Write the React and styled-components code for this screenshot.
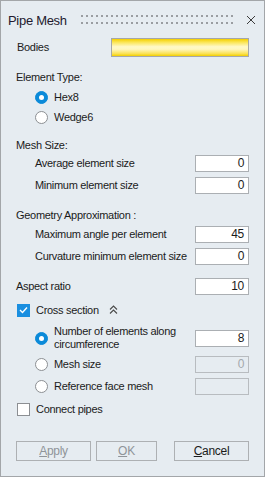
import React from 'react'
import styled, { createGlobalStyle } from 'styled-components'

const Global = createGlobalStyle`
  html, body { margin: 0; padding: 0; background: #e6ecf1; }
  * { box-sizing: border-box; }
`

const Window = styled.div`
  width: 265px;
  height: 477px;
  border: 1px solid #a3a6a9;
  background: #e6ecf1;
  display: flex;
  flex-direction: column;
  font-family: "Liberation Sans", Arial, sans-serif;
  font-size: 11px;
  letter-spacing: -0.3px;
  color: #1b1b1b;
`

const TitleBar = styled.div`
  height: 30px;
  padding: 8px 0 0 7px;
  display: flex;
  align-items: center;
`

const Title = styled.div`
  font-size: 13px;
  color: #231a2e;
  width: 73px;
`

const Grip = styled.div`
  width: 153px;
  height: 10px;
  display: flex;
`

const Close = styled.div`
  margin-left: 12px;
  width: 10px;
  height: 10px;
  display: flex;
`

const Body = styled.div`
  flex: 1;
  display: flex;
  flex-direction: column;
  padding: 0 15px 15px 15px;
`

const Row = styled.div`
  display: flex;
  align-items: center;
  height: ${p => p.h || 17}px;
  margin-top: ${p => p.mt || 0}px;
  padding-left: ${p => p.indent || 0}px;
`

const Label = styled.div`
  flex: 1;
  line-height: 13px;
  white-space: nowrap;
`

const Picker = styled.div`
  width: 138px;
  height: 19px;
  border: 1px solid #a5a7a9;
  background: linear-gradient(#f5d000 0%, #fbe65a 20%, #fff8c6 45%, #fff7c0 60%, #fbe25a 85%, #f3cf00 100%);
`

const Field = styled.div`
  width: 54px;
  height: 17px;
  border: 1px solid ${p => (p.disabled ? '#b8bcc0' : '#abafb3')};
  background: ${p => (p.disabled ? '#e6ecf1' : '#ffffff')};
  color: ${p => (p.disabled ? '#a3a8ad' : '#1b1b1b')};
  text-align: right;
  padding: 0 4px;
  font-size: 12px;
  line-height: 15px;
`

const Radio = styled.span`
  width: 13px;
  height: 13px;
  border-radius: 50%;
  flex: none;
  margin-right: 6px;
  background: ${p => (p.on ? '#0b8ad9' : '#ffffff')};
  border: 1px solid ${p => (p.on ? '#0b8ad9' : '#8c8f93')};
  display: flex;
  align-items: center;
  justify-content: center;
  &::after {
    content: '';
    display: ${p => (p.on ? 'block' : 'none')};
    width: 5px;
    height: 5px;
    border-radius: 50%;
    background: #ffffff;
  }
`

const Check = styled.span`
  width: 13px;
  height: 13px;
  flex: none;
  margin-right: 6px;
  background: ${p => (p.on ? '#1a8fe0' : '#ffffff')};
  border: 1px solid ${p => (p.on ? '#1a8fe0' : '#8c8f93')};
  display: flex;
  align-items: center;
  justify-content: center;
`

const Chevrons = styled.span`
  margin-left: 10px;
  display: flex;
`

const Buttons = styled.div`
  margin-top: auto;
  display: flex;
  height: 20px;
`

const Button = styled.div`
  width: ${p => p.w}px;
  margin-right: ${p => p.mr || 0}px;
  height: 20px;
  border: 1px solid #adb0b3;
  background: #e6ecf1;
  display: flex;
  align-items: center;
  justify-content: center;
  font-size: 12px;
  color: ${p => (p.disabled ? '#8f9499' : '#1b1b1b')};
  u { text-decoration: underline; }
`

const Input = ({ value, disabled }) => <Field disabled={disabled}>{value}</Field>

export default function App() {
  return (
    <Window>
      <Global />
      <TitleBar>
        <Title>Pipe Mesh</Title>
        <Grip>
          <svg width="153" height="10" viewBox="0 0 153 10">
            <defs>
              <pattern id="dots" width="5" height="7" patternUnits="userSpaceOnUse">
                <rect x="0" y="0" width="2" height="2" fill="#9a9da1" />
              </pattern>
            </defs>
            <rect x="0" y="0" width="153" height="9" fill="url(#dots)" />
          </svg>
        </Grip>
        <Close>
          <svg width="10" height="10" viewBox="0 0 10 10">
            <path d="M1 1 L9 9 M9 1 L1 9" stroke="#3c3c3c" strokeWidth="1" />
          </svg>
        </Close>
      </TitleBar>
      <Body>
        <Row h={19} mt={7}>
          <Label style={{ paddingLeft: 1 }}>Bodies</Label>
          <Picker />
        </Row>

        <Row h={16} mt={12}><Label>Element Type:</Label></Row>
        <Row h={18} mt={3} indent={19}><Radio on /><Label>Hex8</Label></Row>
        <Row h={18} mt={2} indent={19}><Radio /><Label>Wedge6</Label></Row>

        <Row h={16} mt={11}><Label>Mesh Size:</Label></Row>
        <Row mt={2} indent={19}><Label>Average element size</Label><Input value="0" /></Row>
        <Row mt={5} indent={19}><Label>Minimum element size</Label><Input value="0" /></Row>

        <Row h={16} mt={13}><Label>Geometry Approximation :</Label></Row>
        <Row mt={3} indent={19}><Label>Maximum angle per element</Label><Input value="45" /></Row>
        <Row mt={5} indent={19}><Label>Curvature minimum element size</Label><Input value="0" /></Row>

        <Row mt={13}><Label>Aspect ratio</Label><Input value="10" /></Row>

        <Row h={16} mt={7} indent={1}>
          <Check on>
            <svg width="9" height="8" viewBox="0 0 9 8">
              <path d="M1 4 L3.5 6.5 L8 1.5" fill="none" stroke="#fff" strokeWidth="1.4" />
            </svg>
          </Check>
          <span>Cross section</span>
          <Chevrons>
            <svg width="9" height="10" viewBox="0 0 9 10">
              <path d="M1 4.5 L4.5 1 L8 4.5 M1 8.5 L4.5 5 L8 8.5" fill="none" stroke="#4a4a4a" strokeWidth="1.1" />
            </svg>
          </Chevrons>
        </Row>
        <Row h={28} mt={6} indent={19}>
          <Radio on />
          <Label>Number of elements along<br />circumference</Label>
          <Input value="8" />
        </Row>
        <Row mt={4} indent={19}><Radio /><Label>Mesh size</Label><Input value="0" disabled /></Row>
        <Row mt={5} indent={19}><Radio /><Label>Reference face mesh</Label><Input value="" disabled /></Row>

        <Row h={16} mt={6} indent={1}><Check /><Label>Connect pipes</Label></Row>

        <Buttons>
          <Button w={75} mr={5} disabled><span><u>A</u>pply</span></Button>
          <Button w={61} mr={17} disabled><span><u>O</u>K</span></Button>
          <Button w={75}><span><u>C</u>ancel</span></Button>
        </Buttons>
      </Body>
    </Window>
  )
}
